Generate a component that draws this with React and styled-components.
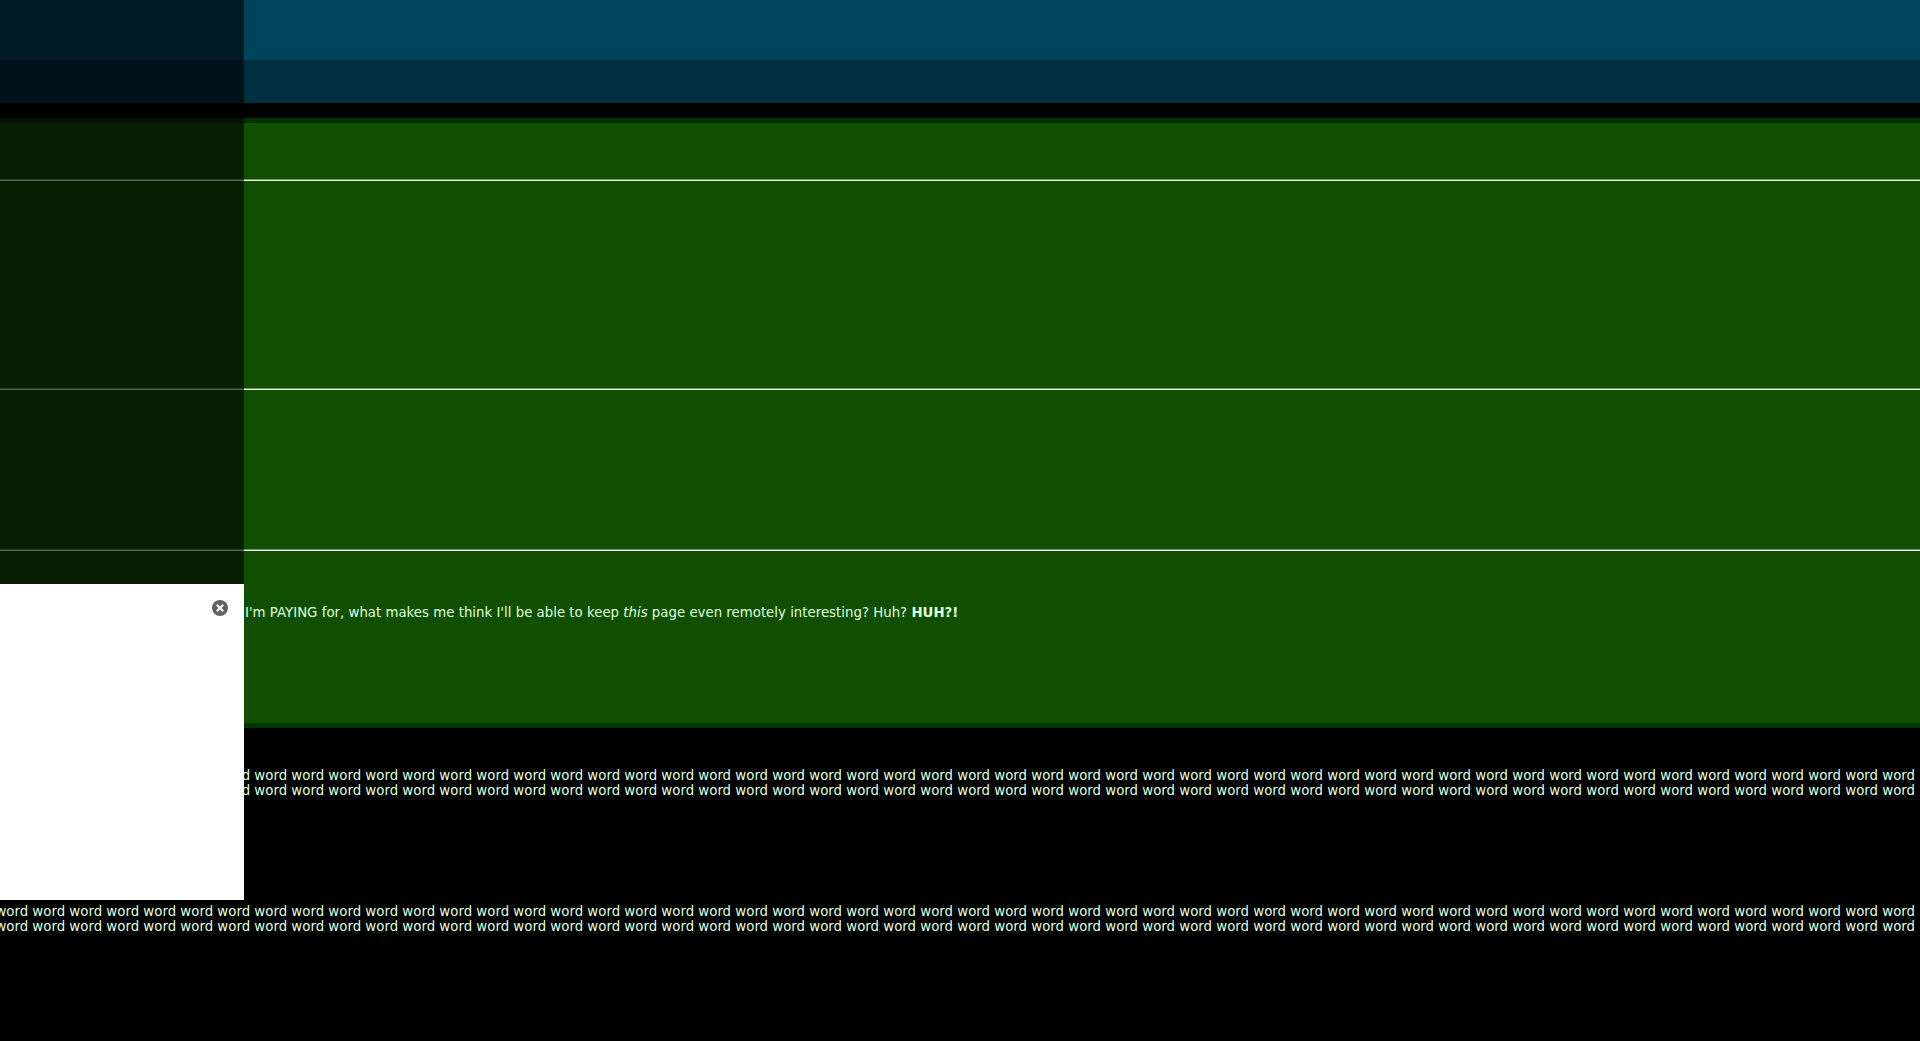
import { useState } from 'react';
import styled, { createGlobalStyle } from 'styled-components';

const WORDS = Array(52).fill('word').join(' ');

const App = () => {
  const [isOpen, setIsOpen] = useState(true);

  return (
    <Page>
      <GlobalStyle />
      <Banner />
      <NavBar />

      <Content>
        <Section height={56} />
        <Rule />
        <Section height={207} />
        <Rule />
        <Section height={159} />
        <Rule />
        <Section height={172}>
          <Paragraph>
            I'm PAYING for, what makes me think I'll be able to keep <i>this</i> page even remotely
            interesting? Huh? <b>HUH?!</b>
          </Paragraph>
        </Section>
      </Content>

      <Footer>
        <WordBlock>
          <WordLine>{WORDS}</WordLine>
          <WordLine>{WORDS}</WordLine>
        </WordBlock>
        <WordBlock>
          <WordLine>{WORDS}</WordLine>
          <WordLine>{WORDS}</WordLine>
        </WordBlock>
      </Footer>

      {isOpen && (
        <Sidebar>
          <Shade />
          <Panel>
            <CloseButton aria-label="Close" onClick={() => setIsOpen(false)}>
              <svg viewBox="0 0 16 16" width="16" height="16">
                <circle cx="8" cy="8" r="8" fill="#5f6368" />
                <path d="M4.8 4.8l6.4 6.4M11.2 4.8l-6.4 6.4" stroke="#fff" strokeWidth="2" />
              </svg>
            </CloseButton>
          </Panel>
        </Sidebar>
      )}
    </Page>
  );
};

const GlobalStyle = createGlobalStyle`
  body {
    margin: 0;
    background: #000;
    color: #dfffdf;
    font: 10pt/15px "DejaVu Sans", sans-serif;
  }
`;

const Page = styled.div`
  position: relative;
  min-height: 100vh;
  overflow: hidden;
`;

const Banner = styled.header`
  height: 60px;
  background: #00445b;
`;

const NavBar = styled.nav`
  height: 43px;
  background: #002f3f;
`;

const Content = styled.main`
  margin-top: 15px;
  border-top: 5px solid #003300;
  border-bottom: 5px solid #003300;
  background: #114f00;
`;

const Section = styled.section`
  display: flow-root;
  min-height: ${({ height }) => height}px;
`;

const Rule = styled.hr`
  margin: 0;
  border: 0;
  border-top: 1px solid #6f9566;
  border-bottom: 1px solid #eeffee;
`;

const Paragraph = styled.p`
  margin: 54px 0 0 245px;
`;

const Footer = styled.footer`
  padding: 40px 5px 0 0;
`;

const WordBlock = styled.div`
  margin-bottom: 106px;
`;

/* lines run off the left edge when they are wider than the window */
const WordLine = styled.div`
  display: flex;
  justify-content: flex-end;
  white-space: nowrap;
`;

const Sidebar = styled.aside`
  position: absolute;
  top: 0;
  left: 0;
  width: 244px;
`;

const Shade = styled.div`
  height: 584px;
  background: rgba(0, 0, 0, 0.6);
`;

const Panel = styled.div`
  display: flex;
  justify-content: flex-end;
  align-items: flex-start;
  box-sizing: border-box;
  height: 316px;
  padding: 16px;
  background: #fff;
`;

const CloseButton = styled.button`
  display: flex;
  padding: 0;
  border: 0;
  background: none;
  cursor: pointer;
`;

export default App;
